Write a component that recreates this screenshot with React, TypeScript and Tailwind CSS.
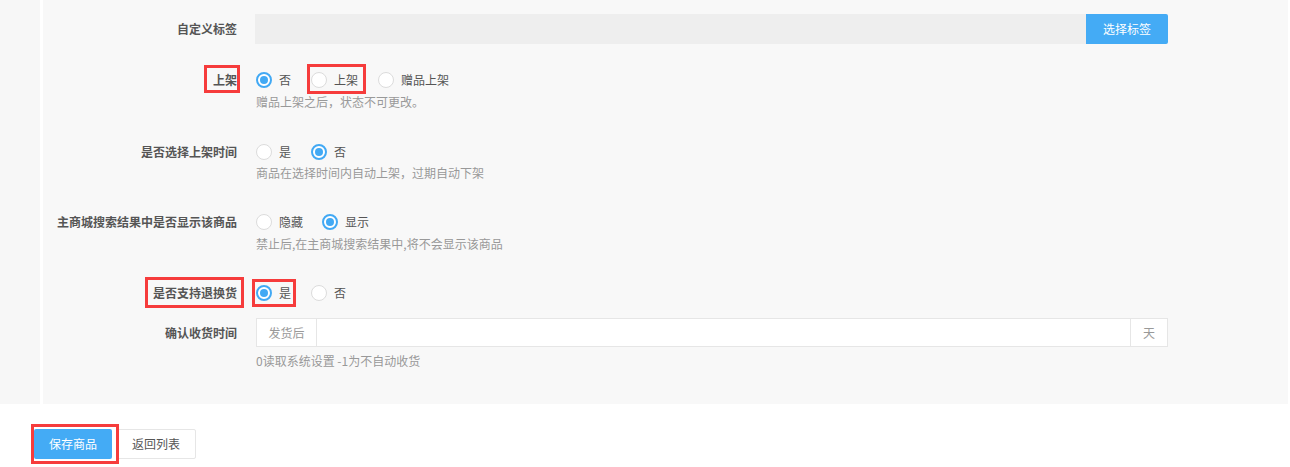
import React from "react";

const font = { fontFamily: '"Noto Sans CJK SC", "Noto Sans", sans-serif' };

function Radio({ checked, label }: { checked?: boolean; label: string }) {
  return (
    <div className="flex items-center gap-[7px] h-5">
      {checked ? (
        <span className="w-4 h-4 rounded-full border-2 border-[#42a9f4] bg-white flex items-center justify-center">
          <span className="w-2 h-2 rounded-full bg-[#42a9f4]" />
        </span>
      ) : (
        <span className="w-4 h-4 rounded-full border border-[#dcdcdc] bg-white" />
      )}
      <span className="text-[12px] text-[#555]">{label}</span>
    </div>
  );
}

function Mark({ className }: { className: string }) {
  return (
    <span
      className={"absolute border-[3px] border-[#f63c3c] pointer-events-none " + className}
    />
  );
}

function Row({
  label,
  children,
  className = "",
}: {
  label: React.ReactNode;
  children: React.ReactNode;
  className?: string;
}) {
  return (
    <div className={"flex " + className}>
      <div className="w-[194px] shrink-0 flex justify-end h-5 items-center text-[12px] font-bold text-[#555]">
        {label}
      </div>
      <div className="ml-[19px] w-[912px]">{children}</div>
    </div>
  );
}

export default function App() {
  return (
    <div className="w-[1290px] h-[467px] bg-white" style={font}>
      <div className="flex h-[404px]">
        <div className="w-[40px] bg-[#f7f7f7]" />
        <div className="w-[3px] bg-white" />
        <div className="w-[1245px] bg-[#f8f8f8] pt-[14px]">
          {/* 自定义标签 */}
          <div className="flex items-center h-[30px]">
            <div className="w-[194px] shrink-0 text-right text-[12px] font-bold text-[#555]">
              自定义标签
            </div>
            <div className="ml-[18px] flex h-[30px]">
              <div className="w-[831px] bg-[#eeeeee]" />
              <button className="w-[82px] bg-[#44abf5] text-white text-[12px] rounded-r-[2px]">
                选择标签
              </button>
            </div>
          </div>

          {/* 上架 */}
          <Row
            className="mt-[26px]"
            label={
              <span className="relative">
                上架
                <Mark className="-left-[9px] -right-[3px] -top-[6px] -bottom-[4px]" />
              </span>
            }
          >
            <div className="flex items-center gap-[20px]">
              <Radio checked label="否" />
              <div className="relative">
                <Radio label="上架" />
                <Mark className="-left-[4px] -right-[8px] -top-[6px] -bottom-[4px]" />
              </div>
              <Radio label="赠品上架" />
            </div>
            <p className="mt-[2px] leading-5 text-[12px] text-[#999]">
              赠品上架之后，状态不可更改。
            </p>
          </Row>

          {/* 是否选择上架时间 */}
          <Row className="mt-[30px]" label="是否选择上架时间">
            <div className="flex items-center gap-[20px]">
              <Radio label="是" />
              <Radio checked label="否" />
            </div>
            <p className="mt-[1px] leading-5 text-[12px] text-[#999]">
              商品在选择时间内自动上架，过期自动下架
            </p>
          </Row>

          {/* 主商城搜索 */}
          <Row className="mt-[29px]" label="主商城搜索结果中是否显示该商品">
            <div className="flex items-center gap-[19px]">
              <Radio label="隐藏" />
              <Radio checked label="显示" />
            </div>
            <p className="mt-[2px] leading-5 text-[12px] text-[#999]">
              禁止后,在主商城搜索结果中,将不会显示该商品
            </p>
          </Row>

          {/* 是否支持退换货 */}
          <Row
            className="mt-[29px]"
            label={
              <span className="relative">
                是否支持退换货
                <Mark className="-left-[8px] -right-[7px] -top-[7px] -bottom-[6px]" />
              </span>
            }
          >
            <div className="flex items-center gap-[20px]">
              <div className="relative">
                <Radio checked label="是" />
                <Mark className="-left-[4px] -right-[5px] -top-[4px] -bottom-[4px]" />
              </div>
              <Radio label="否" />
            </div>
          </Row>

          {/* 确认收货时间 */}
          <div className="flex mt-[15px]">
            <div className="w-[194px] shrink-0 h-[29px] flex items-center justify-end text-[12px] font-bold text-[#555]">
              确认收货时间
            </div>
            <div className="ml-[19px]">
              <div className="flex h-[29px] w-[912px] border border-[#e6e6e6] bg-white text-[12px] text-[#999]">
                <div className="w-[60px] flex items-center justify-center border-r border-[#e6e6e6]">
                  发货后
                </div>
                <div className="flex-1" />
                <div className="w-[37px] flex items-center justify-center border-l border-[#e6e6e6]">
                  天
                </div>
              </div>
              <p className="mt-[4px] leading-5 text-[12px] text-[#999]">
                0读取系统设置 -1为不自动收货
              </p>
            </div>
          </div>
        </div>
        <div className="w-[2px] bg-white" />
      </div>

      <div className="flex gap-[4px] pl-[34px] mt-[25px]">
        <div className="relative">
          <button className="w-[78px] h-[30px] bg-[#44abf5] text-white text-[12px] rounded-[2px]">
            保存商品
          </button>
          <Mark className="-left-[3px] -right-[7px] -top-[5px] -bottom-[5px]" />
        </div>
        <button className="w-[80px] h-[30px] bg-white border border-[#e6e6e6] text-[#555] text-[12px] rounded-[2px]">
          返回列表
        </button>
      </div>
    </div>
  );
}
